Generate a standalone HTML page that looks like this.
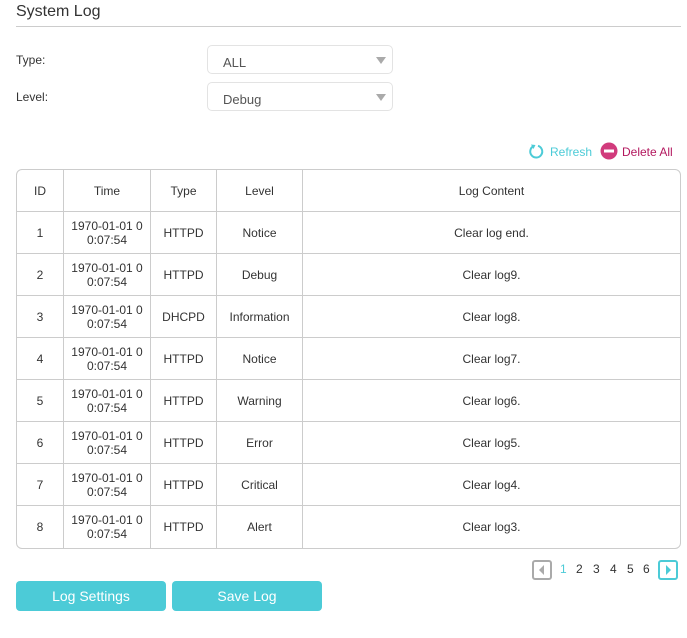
<!DOCTYPE html>
<html><head><meta charset="utf-8"><style>
*{margin:0;padding:0;box-sizing:border-box}
body{width:687px;height:638px;background:#fff;font-family:"Liberation Sans",Arial,sans-serif;color:#333;position:relative;overflow:hidden}
.abs{position:absolute}
.title{left:16px;top:3px;font-size:16px;color:#333}
.hr{left:16px;top:26px;width:665px;height:1px;background:#ccc}
.lbl{font-size:12px;color:#333}
.sel{left:207px;width:186px;height:29px;border:1px solid #e3e3e3;border-radius:5px;font-size:13px;color:#555;padding:9px 0 0 15px}
.sel:after{content:"";position:absolute;right:6px;top:11px;border-left:5px solid transparent;border-right:5px solid transparent;border-top:7px solid #aaa}
table{position:absolute;left:16px;top:169px;width:665px;border-collapse:separate;border-spacing:0;border:1px solid #ccc;border-radius:6px;font-size:12px;color:#333}
td{border-right:1px solid #ccc;border-bottom:1px solid #ccc;text-align:center;height:42px;line-height:14px;padding:0}
tr td:last-child{border-right:none}
tr:last-child td{border-bottom:none}
.btn{top:581px;width:150px;height:30px;background:#4ccbd7;border-radius:4px;color:#fff;font-size:14px;text-align:center;line-height:30px}
.pg{top:562px;font-size:12px;color:#333}
</style></head><body>
<div class="abs title">System Log</div>
<div class="abs hr"></div>
<div class="abs lbl" style="left:16px;top:53px">Type:</div>
<div class="abs lbl" style="left:16px;top:90px">Level:</div>
<div class="abs sel" style="top:45px">ALL</div>
<div class="abs sel" style="top:82px">Debug</div>
<svg class="abs" style="left:528px;top:143px" width="17" height="17" viewBox="0 0 17 17"><path d="M5.5 3.2A6 6 0 1 0 10 2.8" fill="none" stroke="#4ccbd7" stroke-width="2"/><path d="M3 1.5 L7.5 2 L5.5 6 Z" fill="#4ccbd7"/></svg>
<div class="abs" style="left:550px;top:145px;font-size:12px;color:#4ccbd7">Refresh</div>
<svg class="abs" style="left:600px;top:142px" width="18" height="18" viewBox="0 0 18 18"><circle cx="9" cy="9" r="8.5" fill="#d13b7c"/><rect x="4" y="7.5" width="10" height="3" fill="#fff"/></svg>
<div class="abs" style="left:622px;top:145px;font-size:12px;color:#b3175e">Delete All</div>
<table>
<tr><td style="width:47px">ID</td><td style="width:87px">Time</td><td style="width:66px">Type</td><td style="width:86px">Level</td><td>Log Content</td></tr>
<tr><td>1</td><td>1970-01-01 0<br>0:07:54</td><td>HTTPD</td><td>Notice</td><td>Clear log end.</td></tr>
<tr><td>2</td><td>1970-01-01 0<br>0:07:54</td><td>HTTPD</td><td>Debug</td><td>Clear log9.</td></tr>
<tr><td>3</td><td>1970-01-01 0<br>0:07:54</td><td>DHCPD</td><td>Information</td><td>Clear log8.</td></tr>
<tr><td>4</td><td>1970-01-01 0<br>0:07:54</td><td>HTTPD</td><td>Notice</td><td>Clear log7.</td></tr>
<tr><td>5</td><td>1970-01-01 0<br>0:07:54</td><td>HTTPD</td><td>Warning</td><td>Clear log6.</td></tr>
<tr><td>6</td><td>1970-01-01 0<br>0:07:54</td><td>HTTPD</td><td>Error</td><td>Clear log5.</td></tr>
<tr><td>7</td><td>1970-01-01 0<br>0:07:54</td><td>HTTPD</td><td>Critical</td><td>Clear log4.</td></tr>
<tr><td>8</td><td>1970-01-01 0<br>0:07:54</td><td>HTTPD</td><td>Alert</td><td>Clear log3.</td></tr>
</table>
<svg class="abs" style="left:532px;top:560px" width="20" height="20" viewBox="0 0 20 20"><rect x="1" y="1" width="18" height="18" rx="2" fill="none" stroke="#aaa" stroke-width="2"/><path d="M12 5 L7 10 L12 15 Z" fill="#aaa"/></svg>
<div class="abs pg" style="left:560px;color:#4ccbd7">1</div>
<div class="abs pg" style="left:576px">2</div>
<div class="abs pg" style="left:593px">3</div>
<div class="abs pg" style="left:610px">4</div>
<div class="abs pg" style="left:627px">5</div>
<div class="abs pg" style="left:643px">6</div>
<svg class="abs" style="left:658px;top:560px" width="20" height="20" viewBox="0 0 20 20"><rect x="1" y="1" width="18" height="18" rx="2" fill="none" stroke="#4ccbd7" stroke-width="2"/><path d="M8 5 L13 10 L8 15 Z" fill="#4ccbd7"/></svg>
<div class="abs btn" style="left:16px">Log Settings</div>
<div class="abs btn" style="left:172px">Save Log</div>
</body></html>
